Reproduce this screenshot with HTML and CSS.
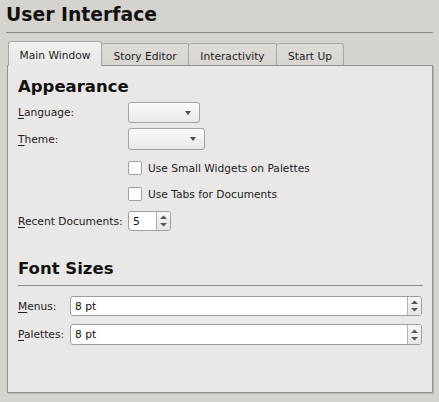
FILE: index.html
```html
<!DOCTYPE html>
<html>
<head>
<meta charset="utf-8">
<link rel="stylesheet" href="styles.css">
</head>
<body>
<div class="window">
  <h1 class="title">User Interface</h1>
  <div class="top-rule"></div>
  <div class="tabs">
    <div class="tab active tab-main">Main Window</div>
    <div class="tab tab-story">Story Editor</div>
    <div class="tab tab-inter">Interactivity</div>
    <div class="tab tab-start">Start Up</div>
  </div>
  <div class="panel">
    <h2 class="section-title appearance">Appearance</h2>
    <div class="form">
      <div class="row row-lang">
        <span class="label"><u>L</u>anguage:</span>
        <div class="combo combo-lang"><span class="arrow"></span></div>
      </div>
      <div class="row row-theme">
        <span class="label"><u>T</u>heme:</span>
        <div class="combo combo-theme"><span class="arrow"></span></div>
      </div>
      <div class="row row-cb1">
        <span class="label"></span>
        <div class="check"><span class="box"></span><span>Use Small Widgets on Palettes</span></div>
      </div>
      <div class="row row-cb2">
        <span class="label"></span>
        <div class="check"><span class="box"></span><span>Use Tabs for Documents</span></div>
      </div>
      <div class="row row-recent">
        <span class="label"><u>R</u>ecent Documents:</span>
        <div class="spin spin-small">
          <span class="spin-value">5</span>
          <span class="spin-btn"><svg width="13" height="18" viewBox="0 0 13 18"><polygon points="3,7 10,7 6.5,3.5" fill="#555"/><polygon points="3,11 10,11 6.5,14.5" fill="#555"/></svg></span>
        </div>
      </div>
    </div>
    <h2 class="section-title fonts">Font Sizes</h2>
    <div class="section-rule"></div>
    <div class="font-rows">
      <div class="frow frow-menus">
        <span class="label"><u>M</u>enus:</span>
        <div class="spin spin-wide">
          <span class="spin-value">8 pt</span>
          <span class="spin-btn"><svg width="13" height="18" viewBox="0 0 13 18"><polygon points="3,7 10,7 6.5,3.5" fill="#555"/><polygon points="3,11 10,11 6.5,14.5" fill="#555"/></svg></span>
        </div>
      </div>
      <div class="frow frow-palettes">
        <span class="label"><u>P</u>alettes:</span>
        <div class="spin spin-wide">
          <span class="spin-value">8 pt</span>
          <span class="spin-btn"><svg width="13" height="18" viewBox="0 0 13 18"><polygon points="3,7 10,7 6.5,3.5" fill="#555"/><polygon points="3,11 10,11 6.5,14.5" fill="#555"/></svg></span>
        </div>
      </div>
    </div>
  </div>
</div>
</body>
</html>
```
FILE: styles.css
```css
* { box-sizing: border-box; }
html, body {
  margin: 0;
  padding: 0;
  background: #d6d3cf;
}
body {
  width: 439px;
  height: 402px;
  overflow: hidden;
  font-family: "DejaVu Sans", "Liberation Sans", sans-serif;
  font-size: 8pt;
  color: #1c1c1c;
}
.window {
  display: flex;
  flex-direction: column;
}
.title {
  margin: 0;
  padding: 3px 0 0 6px;
  font-size: 18.8px;
  line-height: 24px;
  font-weight: bold;
  color: #111;
}
.top-rule {
  margin: 5px 6px 0 6px;
  height: 1px;
  background: #8c8a88;
}
.tabs {
  display: flex;
  align-items: flex-end;
  margin-top: 8px;
  padding-left: 8px;
  margin-bottom: -1px;
  height: 25px;
}
.tab {
  height: 22px;
  margin-bottom: 1px;
  padding-top: 3px;
  display: flex;
  align-items: center;
  justify-content: center;
  border: 1px solid #a9a6a2;
  border-bottom: none;
  border-left: none;
  border-radius: 3px 3px 0 0;
  background: linear-gradient(#dfdcd8, #d9d6d2);
  color: #1c1c1c;
}
.tab.active {
  height: 25px;
  margin-bottom: 0;
  padding-top: 2px;
  border-left: 1px solid #a9a6a2;
  background: linear-gradient(#f2f1f0, #eae8e6);
  position: relative;
  z-index: 1;
}
.tab-main { width: 94px; }
.tab-story { width: 87px; }
.tab-inter { width: 88px; }
.tab-start { width: 67px; }
.panel {
  margin-left: 7px;
  width: 426px;
  height: 328px;
  border: 1px solid #939190;
  box-shadow: 1px 1px 0 #b6b3af;
  background: #eae8e6;
  padding: 11px 9px 0 10px;
  display: flex;
  flex-direction: column;
}
.section-title {
  margin: 0;
  font-size: 16.5px;
  line-height: 20px;
  font-weight: bold;
  color: #111;
}
.form {
  display: flex;
  flex-direction: column;
  margin-top: 5px;
}
.row {
  display: grid;
  grid-template-columns: 110px auto;
  align-items: center;
  justify-items: start;
}
.row-lang { height: 21px; }
.row-theme { height: 22px; margin-top: 5px; }
.row-cb1 { height: 14px; margin-top: 11px; }
.row-cb2 { height: 14px; margin-top: 12px; }
.row-recent { height: 20px; margin-top: 10px; }
.label u { text-decoration-thickness: 1px; text-underline-offset: 2px; }
.combo {
  height: 100%;
  border: 1px solid #a5a3a0;
  border-radius: 3px;
  background: linear-gradient(#fbfbfb, #e9e8e7);
  display: flex;
  align-items: center;
  justify-content: flex-end;
  padding-right: 8px;
}
.combo-lang { width: 72px; }
.combo-theme { width: 77px; }
.arrow {
  width: 0;
  height: 0;
  border-left: 3.5px solid transparent;
  border-right: 3.5px solid transparent;
  border-top: 4px solid #4a4a4a;
}
.check {
  display: flex;
  align-items: center;
  gap: 6px;
}
.box {
  width: 14px;
  height: 14px;
  border: 1px solid #a09e9b;
  border-radius: 2px;
  background: #fff;
}
.spin {
  height: 100%;
  border: 1px solid #a09e9b;
  border-radius: 3px;
  background: #fff;
  display: flex;
  align-items: stretch;
}
.spin-small { width: 43px; }
.spin-wide { width: 352px; }
.spin-value {
  flex: 1;
  display: flex;
  align-items: center;
  padding-left: 4px;
  color: #111;
}
.spin-btn {
  width: 14px;
  border-left: 1px solid #b3b1ae;
  border-radius: 0 2px 2px 0;
  background: linear-gradient(#f7f7f7, #e6e5e4);
  display: flex;
  align-items: center;
  justify-content: center;
}
.spin-btn svg { display: block; }
.fonts { margin-top: 28px; }
.section-rule {
  margin-top: 6px;
  height: 1px;
  background: #8c8a88;
}
.font-rows {
  display: flex;
  flex-direction: column;
  margin-top: 10px;
}
.frow {
  display: grid;
  grid-template-columns: 52px auto;
  align-items: center;
  justify-items: start;
  height: 20px;
}
.frow-palettes { margin-top: 8px; height: 21px; }
```
